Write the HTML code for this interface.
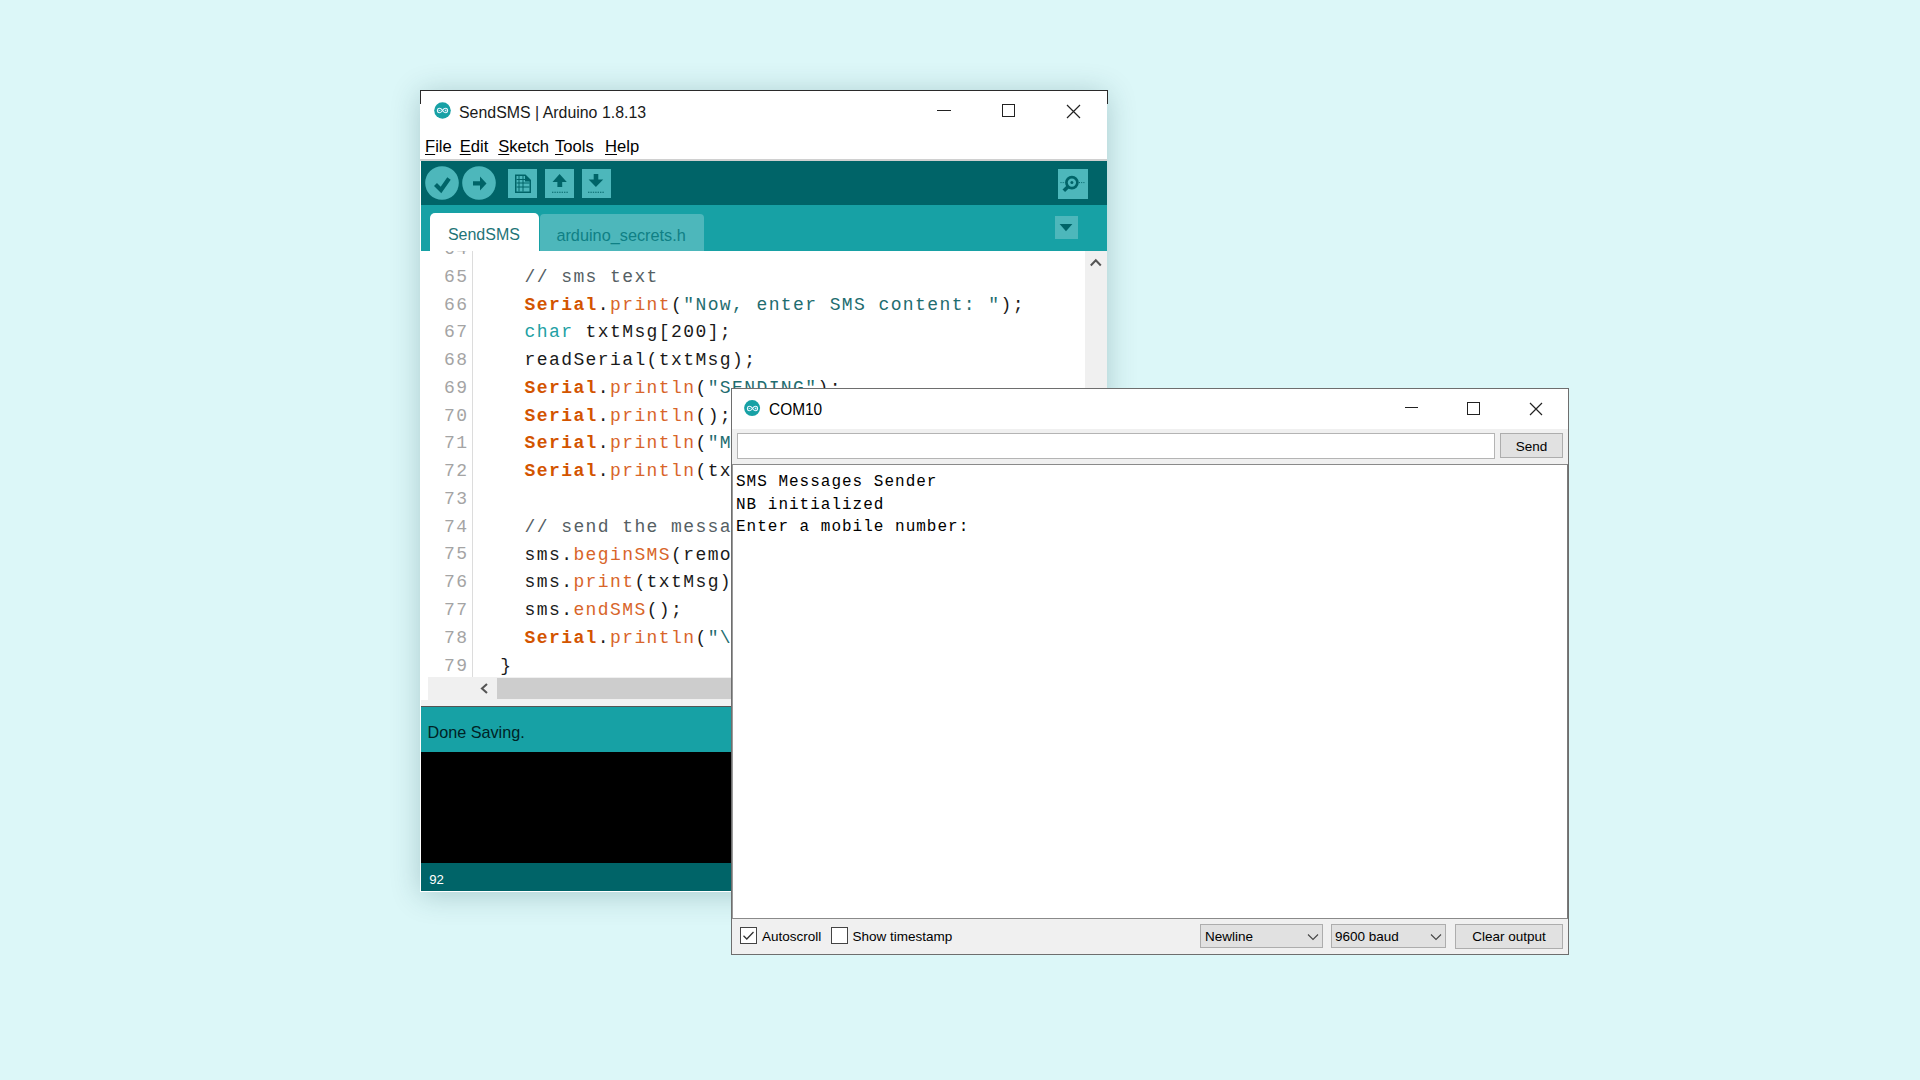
<!DOCTYPE html>
<html><head><meta charset="utf-8">
<style>
*{margin:0;padding:0;box-sizing:border-box}
html,body{width:1920px;height:1080px;overflow:hidden}
body{background:#dcf7f8;position:relative;font-family:"Liberation Sans",sans-serif}
.a{position:absolute}
.t{position:absolute;white-space:pre;line-height:1}
.m{font-family:"Liberation Mono",monospace}
u{text-decoration:underline;text-decoration-thickness:1px;text-underline-offset:1.5px}
.ln{font-size:18px;letter-spacing:1.4px;line-height:27.76px;color:#a4a4a4}
.code{font-size:18px;letter-spacing:1.4px;line-height:27.76px;color:#1a1a1a}
.kw{color:#d35400;font-weight:bold}.fn{color:#d8652a}.st{color:#1f6d70}.ty{color:#22a0a4}.cm{color:#556064}
</style></head><body>

<!-- Arduino main window -->
<div class="a" id="shadow" style="left:420px;top:90px;width:687px;height:802px;box-shadow:0 3px 28px rgba(0,60,70,0.23)"></div>
<div class="a" id="ard" style="left:420px;top:90px;width:687px;height:802px;background:#fff;overflow:hidden">
  <!-- borders -->
  <div class="a" style="left:0;top:0;width:1px;height:14px;background:#2a2a2a"></div>
  <!-- title -->
  <svg class="a" style="left:13.5px;top:12px" width="17" height="17" viewBox="0 0 17 17"><circle cx="8.5" cy="8.5" r="8.3" fill="#17a1a5"/><g transform="translate(8.5 8.5) scale(0.86) translate(-8.5 -8.5)"><path d="M8.5 8.5C7.3 6.6 6.2 5.9 4.9 5.9C3.5 5.9 2.6 7 2.6 8.5C2.6 10 3.5 11.1 4.9 11.1C6.2 11.1 7.3 10.4 8.5 8.5C9.7 6.6 10.8 5.9 12.1 5.9C13.5 5.9 14.4 7 14.4 8.5C14.4 10 13.5 11.1 12.1 11.1C10.8 11.1 9.7 10.4 8.5 8.5Z" stroke="#e8f4ff" stroke-width="1.3" fill="none"/><path d="M4 8.5H6M11.1 8.5H13.1M12.1 7.5V9.5" stroke="#e8f4ff" stroke-width="0.9"/></g></svg>
  <div class="t" style="left:38.6px;top:14px;font-size:17.2px;color:#1a1a1a;transform:scaleX(0.925);transform-origin:0 0">SendSMS | Arduino 1.8.13</div>
  <!-- window controls -->
  <div class="a" style="left:517px;top:20px;width:14px;height:1px;background:#222"></div>
  <div class="a" style="left:582px;top:14px;width:13px;height:13px;border:1px solid #222"></div>
  <svg class="a" style="left:646px;top:14px" width="15" height="15" viewBox="0 0 15 15"><path d="M1 1L14 14M14 1L1 14" stroke="#222" stroke-width="1.2"/></svg>
  <!-- menu -->
  <div class="t" style="left:5px;top:49px;font-size:16.6px;color:#000"><u>F</u>ile</div>
  <div class="t" style="left:39.7px;top:49px;font-size:16.6px;color:#000"><u>E</u>dit</div>
  <div class="t" style="left:78.2px;top:49px;font-size:16.6px;color:#000"><u>S</u>ketch</div>
  <div class="t" style="left:135px;top:49px;font-size:16.6px;color:#000"><u>T</u>ools</div>
  <div class="t" style="left:185px;top:49px;font-size:16.6px;color:#000"><u>H</u>elp</div>
  <div class="a" style="left:0;top:69px;width:688px;height:2px;background:#d0d0d0"></div>
  <!-- toolbar -->
  <div class="a" style="left:1px;top:71px;width:686px;height:44px;background:#006468"></div>
  <svg class="a" style="left:5px;top:76px" width="34" height="34" viewBox="0 0 34 34"><circle cx="17" cy="17" r="16.8" fill="#4db7bb"/><path d="M10.5 18.5L16 24L24 12.5" stroke="#006468" stroke-width="4.2" fill="none"/></svg>
  <svg class="a" style="left:42px;top:76px" width="34" height="34" viewBox="0 0 34 34"><circle cx="17" cy="17" r="16.8" fill="#4db7bb"/><path d="M11 15.2H18V10.5L24.5 17.5L18 24.5V19.4H11Z" fill="#006468"/></svg>
  <div class="a" style="left:88px;top:79px;width:29px;height:29px;background:#4db7bb"></div>
  <svg class="a" style="left:88px;top:79px" width="29" height="29" viewBox="0 0 29 29"><path d="M7 5.5H17.5L23 11V24H7Z" fill="#006468"/><path d="M8.5 7H17V12.5H21.5V22.5H8.5Z" fill="#4db7bb"/><path d="M11 7V22.5M15 7V22.5M8.5 10.5H17M8.5 14H21.5M8.5 18H21.5" stroke="#006468" stroke-width="1" fill="none"/></svg>
  <div class="a" style="left:124.5px;top:79px;width:29px;height:29px;background:#4db7bb"></div>
  <svg class="a" style="left:124.5px;top:79px" width="29" height="29" viewBox="0 0 29 29"><path d="M7.5 12.9L14.6 4.9L21.8 12.9H17.2V18H12.4V12.9Z" fill="#006468"/><path d="M7 23.2H23" stroke="#006468" stroke-width="1.1" stroke-dasharray="1.4 1"/></svg>
  <div class="a" style="left:161.5px;top:79px;width:29px;height:29px;background:#4db7bb"></div>
  <svg class="a" style="left:161.5px;top:79px" width="29" height="29" viewBox="0 0 29 29"><path d="M11.7 4.9H16.3V10.6H21.2L13.9 18.1L6.6 10.6H11.7Z" fill="#006468"/><path d="M6 23.2H22" stroke="#006468" stroke-width="1.1" stroke-dasharray="1.4 1"/></svg>
  <div class="a" style="left:638px;top:79px;width:29.5px;height:29.5px;background:#4db7bb"></div>
  <svg class="a" style="left:638px;top:79px" width="30" height="30" viewBox="0 0 30 30"><circle cx="13.9" cy="13.6" r="5.5" stroke="#006468" stroke-width="2.7" fill="none"/><circle cx="13.9" cy="13.6" r="1.5" fill="#006468"/><path d="M10.2 17.4L5.8 21.8" stroke="#006468" stroke-width="3.6"/><path d="M2.5 13.6H7M21 13.6H27" stroke="#006468" stroke-width="1" stroke-dasharray="1 1.2"/></svg>
  <!-- tab bar -->
  <div class="a" style="left:1px;top:115px;width:686px;height:46px;background:#17a1a5"></div>
  <div class="a" style="left:10.2px;top:123px;width:108.5px;height:38px;background:#fff;border-radius:5px 5px 0 0"></div>
  <div class="a" style="left:120.3px;top:123.5px;width:163.3px;height:37.5px;background:#4db7bb;border-radius:4px 4px 0 0"></div>
  <div class="t" style="left:27.9px;top:137.4px;font-size:16px;color:#1f7478">SendSMS</div>
  <div class="t" style="left:136.4px;top:137.2px;font-size:16.3px;color:#0f8085">arduino_secrets.h</div>
  <div class="a" style="left:635px;top:126px;width:23px;height:23px;background:#4db7bb"></div>
  <svg class="a" style="left:635px;top:126px" width="23" height="23" viewBox="0 0 23 23"><path d="M4.6 8H17.4L11 15.3Z" fill="#006468"/></svg>
  <!-- editor -->
  <div class="a" style="left:1px;top:161px;width:686px;height:426px;background:#fff;overflow:hidden">
    <div class="t m ln" style="left:0;top:-14.96px;width:47.5px;text-align:right">64
65
66
67
68
69
70
71
72
73
74
75
76
77
78
79</div>
    <div class="a" style="left:51px;top:0;width:1px;height:426px;background:#dcdcdc"></div>
    <div class="t m code" style="left:79.2px;top:12.9px"><span class="cm">  // sms text</span>
  <span class="kw">Serial</span>.<span class="fn">print</span>(<span class="st">"Now, enter SMS content: "</span>);
  <span class="ty">char</span> txtMsg[200];
  readSerial(txtMsg);
  <span class="kw">Serial</span>.<span class="fn">println</span>(<span class="st">"SENDING"</span>);
  <span class="kw">Serial</span>.<span class="fn">println</span>();
  <span class="kw">Serial</span>.<span class="fn">println</span>(<span class="st">"Message:"</span>);
  <span class="kw">Serial</span>.<span class="fn">println</span>(txtMsg);

<span class="cm">  // send the message</span>
  sms.<span class="fn">beginSMS</span>(remoteNum);
  sms.<span class="fn">print</span>(txtMsg);
  sms.<span class="fn">endSMS</span>();
  <span class="kw">Serial</span>.<span class="fn">println</span>(<span class="st">"\nCOMPLETE!\n"</span>);
}</div>
    <!-- vscroll -->
    <div class="a" style="left:664px;top:0;width:22px;height:426px;background:#f0f0f0"></div>
    <svg class="a" style="left:668px;top:5px" width="14" height="12" viewBox="0 0 14 12"><path d="M1.8 9.5L6.8 4.2L11.8 9.5" stroke="#555" stroke-width="2" fill="none"/></svg>
  </div>
  <!-- hscroll -->
  <div class="a" style="left:8px;top:587px;width:680px;height:23px;background:#f0f0f0"></div>
  <div class="a" style="left:77px;top:588px;width:611px;height:21px;background:#cdcdcd"></div>
  <svg class="a" style="left:58px;top:592px" width="12" height="13" viewBox="0 0 12 13"><path d="M9 2L4 6.5L9 11" stroke="#555" stroke-width="2.1" fill="none"/></svg>
  <div class="a" style="left:1px;top:610px;width:686px;height:6px;background:#f2f2f2"></div>
  <!-- status -->
  <div class="a" style="left:1px;top:616px;width:686px;height:1px;background:#555"></div>
  <div class="a" style="left:1px;top:617px;width:686px;height:45px;background:#17a1a5"></div>
  <div class="t" style="left:7.5px;top:634.2px;font-size:16.2px;color:#002325">Done Saving.</div>
  <!-- console -->
  <div class="a" style="left:1px;top:662px;width:686px;height:111px;background:#000"></div>
  <!-- line status -->
  <div class="a" style="left:1px;top:773px;width:686px;height:28px;background:#006468"></div>
  <div class="t" style="left:9.2px;top:783px;font-size:13.2px;color:#fff">92</div>
</div>

<div class="a" style="left:420px;top:90px;width:688px;height:1px;background:#2a2a2a"></div>
<div class="a" style="left:1107px;top:90px;width:1px;height:14px;background:#2a2a2a"></div>

<!-- COM10 window -->
<div class="a" id="com" style="left:731px;top:388px;width:838px;height:567px;background:#f0f0f0;border:1px solid #6e6e6e">
  <div class="a" style="left:0;top:0;width:836px;height:40px;background:#fff"></div>
  <svg class="a" style="left:11.5px;top:10.5px" width="17" height="17" viewBox="0 0 17 17"><circle cx="8.1" cy="8.1" r="8" fill="#17a1a5"/><g transform="translate(8.5 8.5) scale(0.86) translate(-8.5 -8.5)"><path d="M8.5 8.5C7.3 6.6 6.2 5.9 4.9 5.9C3.5 5.9 2.6 7 2.6 8.5C2.6 10 3.5 11.1 4.9 11.1C6.2 11.1 7.3 10.4 8.5 8.5C9.7 6.6 10.8 5.9 12.1 5.9C13.5 5.9 14.4 7 14.4 8.5C14.4 10 13.5 11.1 12.1 11.1C10.8 11.1 9.7 10.4 8.5 8.5Z" stroke="#e8f4ff" stroke-width="1.3" fill="none"/><path d="M4 8.5H6M11.1 8.5H13.1M12.1 7.5V9.5" stroke="#e8f4ff" stroke-width="0.9"/></g></svg>
  <div class="t" style="left:36.5px;top:12.8px;font-size:16.8px;color:#000;transform:scaleX(0.92);transform-origin:0 0">COM10</div>
  <div class="a" style="left:673px;top:18px;width:13px;height:1px;background:#222"></div>
  <div class="a" style="left:735px;top:13px;width:13px;height:13px;border:1px solid #222"></div>
  <svg class="a" style="left:797px;top:13px" width="14" height="14" viewBox="0 0 14 14"><path d="M1 1L13 13M13 1L1 13" stroke="#222" stroke-width="1.2"/></svg>
  <!-- input -->
  <div class="a" style="left:5px;top:44px;width:758px;height:26px;background:#fff;border:1px solid #b4b4b4"></div>
  <div class="a" style="left:768px;top:44px;width:63px;height:25px;background:#e1e1e1;border:1px solid #adadad"></div>
  <div class="t" style="left:768px;top:51px;width:63px;text-align:center;font-size:13.5px;color:#000">Send</div>
  <!-- output -->
  <div class="a" style="left:0;top:75px;width:836px;height:455px;background:#fff;border-top:1px solid #8a8a8a;border-bottom:1px solid #8a8a8a;border-right:1px solid #7a7a7a;border-left:1px solid #9a9a9a"></div>
  <div class="t m" style="left:4px;top:81.6px;font-size:16px;letter-spacing:1.0px;line-height:22.9px;color:#000">SMS Messages Sender
NB initialized
Enter a mobile number:</div>
  <!-- bottom -->
  <div class="a" style="left:8px;top:538px;width:17px;height:17px;border:1px solid #444;background:#fff"></div><svg class="a" style="left:8px;top:538px" width="17" height="17" viewBox="0 0 17 17"><path d="M3.5 8.8L6.8 12L13.5 5" stroke="#333" stroke-width="1.3" fill="none"/></svg>
  <div class="t" style="left:30px;top:541px;font-size:13.5px;color:#000">Autoscroll</div>
  <div class="a" style="left:99px;top:538px;width:17px;height:17px;border:1px solid #444;background:#fff"></div>
  <div class="t" style="left:120.5px;top:541px;font-size:13.5px;color:#000">Show timestamp</div>
  <div class="a" style="left:468px;top:535px;width:123px;height:24px;background:#e1e1e1;border:1px solid #adadad"></div>
  <div class="t" style="left:473px;top:541px;font-size:13.5px;color:#000">Newline</div><svg class="a" style="left:574.5px;top:544px" width="12" height="8" viewBox="0 0 12 8"><path d="M1 1.5L6 6.5L11 1.5" stroke="#444" stroke-width="1.1" fill="none"/></svg>
  <div class="a" style="left:599px;top:535px;width:115px;height:24px;background:#e1e1e1;border:1px solid #adadad"></div>
  <div class="t" style="left:603px;top:541px;font-size:13.5px;color:#000">9600 baud</div><svg class="a" style="left:698px;top:544px" width="12" height="8" viewBox="0 0 12 8"><path d="M1 1.5L6 6.5L11 1.5" stroke="#444" stroke-width="1.1" fill="none"/></svg>
  <div class="a" style="left:723px;top:535px;width:108px;height:25px;background:#e1e1e1;border:1px solid #adadad"></div>
  <div class="t" style="left:723px;top:541px;width:108px;text-align:center;font-size:13.5px;color:#000">Clear output</div>
</div>
</body></html>
